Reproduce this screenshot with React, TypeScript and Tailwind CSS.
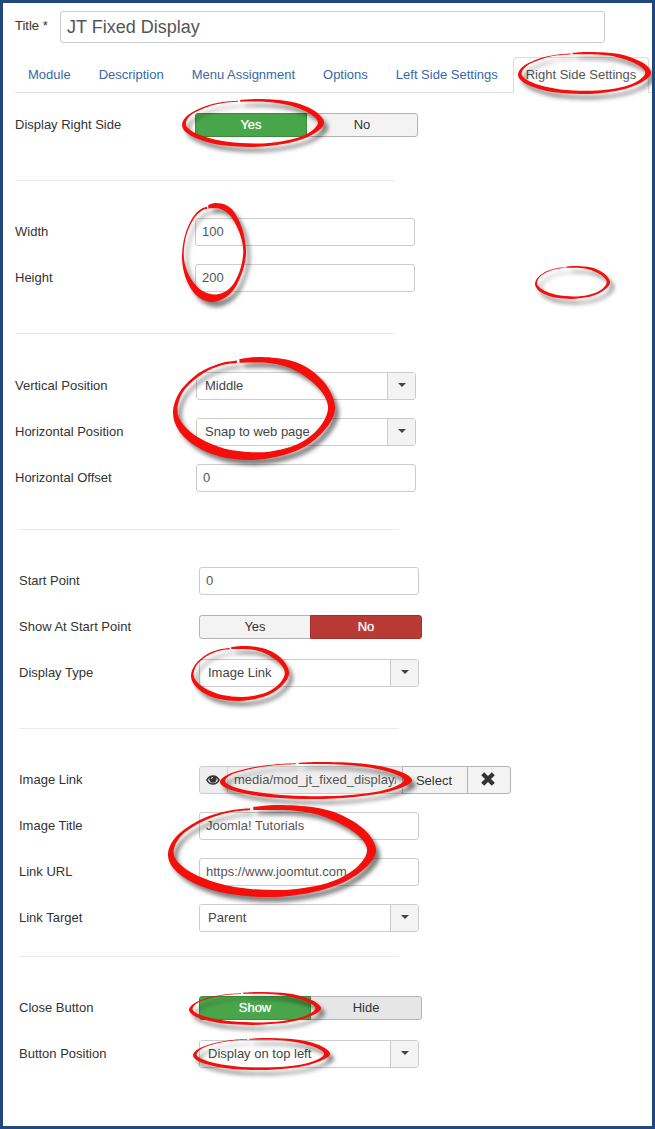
import { useState } from "react";
import type { ReactNode } from "react";

const tabs = ["Module", "Description", "Menu Assignment", "Options", "Left Side Settings", "Right Side Settings"];

type Point = [number, number];

/** Brush-stroke outline on a 100 by 100 grid, clockwise from the gap at the top. */
const outerEdge: Point[] = [
  [41, 2], [53, 0], [70, 2.5], [83, 10.5], [94.5, 27], [100, 48], [96, 66], [84.5, 84], [69, 95],
  [49, 100], [29, 96.5], [14, 86.5], [3.5, 71], [0, 53], [4.5, 33], [16, 15.5], [28.5, 6.5], [39.5, 3.5],
];
const innerEdge: Point[] = [
  [39.5, 5.8], [30, 8], [18.5, 16], [7, 32], [2.7, 51], [6.5, 66], [16.5, 79], [32, 89], [51, 92.5],
  [66, 90], [80, 82], [91, 67], [95.7, 48], [89.5, 29.5], [75.5, 13], [60, 6], [41, 5.5],
];

/** Joins points with a Catmull-Rom curve written as cubic segments. */
function smooth(points: Point[]) {
  return points
    .slice(0, -1)
    .map((p1, i) => {
      const p0 = points[i - 1] ?? p1;
      const p2 = points[i + 1];
      const p3 = points[i + 2] ?? p2;
      const a = [p1[0] + (p2[0] - p0[0]) / 6, p1[1] + (p2[1] - p0[1]) / 6];
      const b = [p2[0] - (p3[0] - p1[0]) / 6, p2[1] - (p3[1] - p1[1]) / 6];
      return `C${a.join(" ")} ${b.join(" ")} ${p2.join(" ")}`;
    })
    .join("");
}

const ringPath = `M${outerEdge[0].join(" ")}${smooth(outerEdge)}L${innerEdge[0].join(" ")}${smooth(innerEdge)}Z`;

/** Highlight ring that stretches to the box it is given. */
function Ring({ className }: { className: string }) {
  return (
    <svg
      aria-hidden="true"
      viewBox="0 0 100 100"
      preserveAspectRatio="none"
      className={`pointer-events-none absolute z-10 overflow-visible drop-shadow-[4px_5px_2px_rgba(0,0,0,0.5)] ${className}`}
    >
      <path fill="#f40f0b" d={ringPath} />
    </svg>
  );
}

function Section({ children, className }: { children: ReactNode; className: string }) {
  return <section className={`relative flex flex-col gap-[18px] ${className}`}>{children}</section>;
}

function Divider({ className = "" }: { className?: string }) {
  return <hr className={`w-[380px] max-w-full border-t border-[#ebebeb] ${className}`} />;
}

function Row({ label, id, children }: { label: string; id: string; children: ReactNode }) {
  return (
    <div className="flex h-7 items-center">
      <label htmlFor={id} className="w-[180px] shrink-0">
        {label}
      </label>
      {children}
    </div>
  );
}

function TextField({ label, id, value }: { label: string; id: string; value: string }) {
  return (
    <Row label={label} id={id}>
      <input
        id={id}
        type="text"
        defaultValue={value}
        className="h-7 w-[220px] rounded-[3px] border border-[#ccc] bg-white px-1.5 pb-0.5 text-[#555] outline-none"
      />
    </Row>
  );
}

function SelectField({ label, id, value }: { label: string; id: string; value: string }) {
  return (
    <Row label={label} id={id}>
      <div className="relative flex h-7 w-[220px] overflow-hidden rounded-[3px] border border-[#ccc]">
        <select id={id} className="w-full appearance-none bg-white pr-8 pl-2 text-[#444] outline-none">
          <option>{value}</option>
        </select>
        <span className="pointer-events-none absolute inset-y-0 right-0 flex w-7 items-center justify-center border-l border-[#ccc] bg-[#f3f3f3] pb-0.5">
          <svg aria-hidden="true" viewBox="0 0 8 4" className="h-1 w-2">
            <path d="M0 0H8L4 4Z" fill="#444" />
          </svg>
        </span>
      </div>
    </Row>
  );
}

type ToggleProps = {
  label: string;
  id: string;
  options: [string, string];
  initial: 0 | 1;
  idleClass?: string;
};

function ToggleField({ label, id, options, initial, idleClass = "bg-[#f3f3f3]" }: ToggleProps) {
  const [selected, setSelected] = useState<number>(initial);
  const activeClasses = ["border-[#3b8b3b] bg-[#49a54a]", "border-[#a22f2b] bg-[#b93a35]"];
  return (
    <Row label={label} id={`${id}-0`}>
      <div role="radiogroup" aria-label={label} className="flex">
        {options.map((option, index) => (
          <label
            key={option}
            className={`relative flex h-6 w-28 items-center justify-center border ${
              index === 0 ? "rounded-l-[3px]" : "-ml-px rounded-r-[3px]"
            } ${
              selected === index
                ? `z-[1] text-white [text-shadow:0_0_1px_rgba(255,255,255,0.7)] ${activeClasses[index]}`
                : `border-[#b3b3b3] text-[#333] ${idleClass}`
            }`}
          >
            <input
              id={`${id}-${index}`}
              type="radio"
              name={id}
              checked={selected === index}
              onChange={() => setSelected(index)}
              className="absolute inset-0 appearance-none"
            />
            {option}
          </label>
        ))}
      </div>
    </Row>
  );
}

function MediaField() {
  return (
    <Row label="Image Link" id="image-link">
      <div className="flex h-7">
        <span className="flex w-[29px] items-center justify-center rounded-l-[3px] border border-[#ccc] bg-[#eee] pr-0.5">
          <svg aria-hidden="true" viewBox="0 0 14 10" className="h-2.5 w-3.5">
            <path
              fillRule="evenodd"
              fill="#333"
              d="M0 5C1.500 2 4 .3 7 .3S12.500 2 14 5C12.500 8 10 9.700 7 9.700S1.500 8 0 5ZM1.900 5C3 7.100 4.800 8.200 7 8.200S11 7.100 12.100 5C11.700 4.200 11.200 3.500 10.500 2.900A3.700 3.700 0 1 1 3.500 2.900C2.800 3.500 2.300 4.200 1.900 5ZM5 3.800C5 2.800 5.700 2.100 6.800 2.100V3C6.200 3 5.900 3.300 5.900 3.800Z"
            />
          </svg>
        </span>
        <input
          id="image-link"
          type="text"
          readOnly
          defaultValue="media/mod_jt_fixed_display/"
          className="-ml-px w-44 border border-[#ccc] bg-[#eee] px-1.5 text-[#555] outline-none"
        />
        <button
          type="button"
          className="-ml-px w-[66px] border border-[#b3b3b3] bg-[#f3f3f3] pt-0.5 pr-0.5 text-[#333]"
        >
          Select
        </button>
        <button
          type="button"
          aria-label="Clear"
          className="-ml-px flex w-11 items-center justify-center rounded-r-[3px] border border-[#b3b3b3] bg-[#f3f3f3] pr-0.5 pb-0.5"
        >
          <svg aria-hidden="true" viewBox="0 0 14 14" className="size-3.5">
            <path
              fill="#333"
              d="M3.200 .3L7 3.900L10.800 .3L13.800 3.300L10 7L13.800 10.700L10.800 13.700L7 10.100L3.200 13.700L.2 10.700L4 7L.2 3.300Z"
            />
          </svg>
        </button>
      </div>
    </Row>
  );
}

export default function App() {
  return (
    <main className="min-h-screen w-full overflow-hidden border-[3px] border-[#1f497d] bg-white pb-[58px] font-['Liberation_Sans',Arial,sans-serif] text-[13px] leading-[18px] text-[#333]">
      <header className="flex pt-2 pr-[47px] pl-3">
        <label htmlFor="title" className="w-[45px] shrink-0 pt-1.5">
          Title *
        </label>
        <input
          id="title"
          type="text"
          defaultValue="JT Fixed Display"
          className="h-8 min-w-0 flex-1 rounded-[3px] border border-[#ccc] px-1.5 text-[18px] text-[#555] outline-none"
        />
      </header>

      <nav className="mt-3.5 ml-3 flex h-9 border-b border-[#ddd]">
        {tabs.map((tab) => (
          <a
            key={tab}
            href="#"
            className={
              tab === "Right Side Settings"
                ? "relative -mb-px shrink-0 rounded-t-[4px] border border-b-0 border-[#ddd] bg-white px-3 pt-2 whitespace-nowrap text-[#555]"
                : "mr-0.5 shrink-0 border border-b-0 border-transparent px-3 pt-2 whitespace-nowrap text-[#3a67a6]"
            }
          >
            {tab}
            {tab === "Right Side Settings" && <Ring className="-top-[6px] left-1 h-[42px] w-[133px]" />}
          </a>
        ))}
      </nav>

      <Section className="ml-3 pt-[18px] pb-[41px]">
        <ToggleField label="Display Right Side" id="display-right" options={["Yes", "No"]} initial={0} />
        <Ring className="top-[6px] left-[167px] h-12 w-[142px]" />
      </Section>
      <Divider className="ml-3" />

      <Section className="ml-3 pt-[37px] pb-[41px]">
        <TextField label="Width" id="width" value="100" />
        <TextField label="Height" id="height" value="200" />
        <Ring className="top-[22px] left-[167px] h-[99px] w-16" />
        <Ring className="top-[85px] left-[520px] h-[33px] w-[75px]" />
      </Section>
      <Divider className="ml-3" />

      <Section className="ml-3 pt-[38px] pb-[37px] [&_label]:w-[181px]">
        <SelectField label="Vertical Position" id="vertical-position" value="Middle" />
        <SelectField label="Horizontal Position" id="horizontal-position" value="Snap to web page" />
        <TextField label="Horizontal Offset" id="horizontal-offset" value="0" />
        <Ring className="top-[23px] left-[158px] h-[103px] w-[162px]" />
      </Section>
      <Divider className="ml-4" />

      <Section className="ml-4 pt-[37px] pb-[41px]">
        <TextField label="Start Point" id="start-point" value="0" />
        <ToggleField label="Show At Start Point" id="show-at-start" options={["Yes", "No"]} initial={1} />
        <SelectField label="Display Type" id="display-type" value="Image Link" />
        <Ring className="top-[116px] left-[172px] h-[55px] w-[98px]" />
      </Section>
      <Divider className="ml-4" />

      <Section className="ml-4 pt-[37px] pb-6">
        <MediaField />
        <TextField label="Image Title" id="image-title" value="Joomla! Tutorials" />
        <TextField label="Link URL" id="link-url" value="https://www.joomtut.com" />
        <SelectField label="Link Target" id="link-target" value="Parent" />
        <Ring className="top-[33px] left-[201px] h-[37px] w-48" />
        <Ring className="top-[76px] left-[149px] h-[92px] w-52" />
      </Section>
      <Divider className="ml-4" />

      <Section className="ml-4 pt-[37px]">
        <ToggleField
          label="Close Button"
          id="close-button"
          options={["Show", "Hide"]}
          initial={0}
          idleClass="bg-[#e6e6e6]"
        />
        <SelectField label="Button Position" id="button-position" value="Display on top left" />
        <Ring className="top-[35px] left-[170px] h-[33px] w-[132px]" />
        <Ring className="top-[81px] left-[174px] h-8 w-[137px]" />
      </Section>
    </main>
  );
}
